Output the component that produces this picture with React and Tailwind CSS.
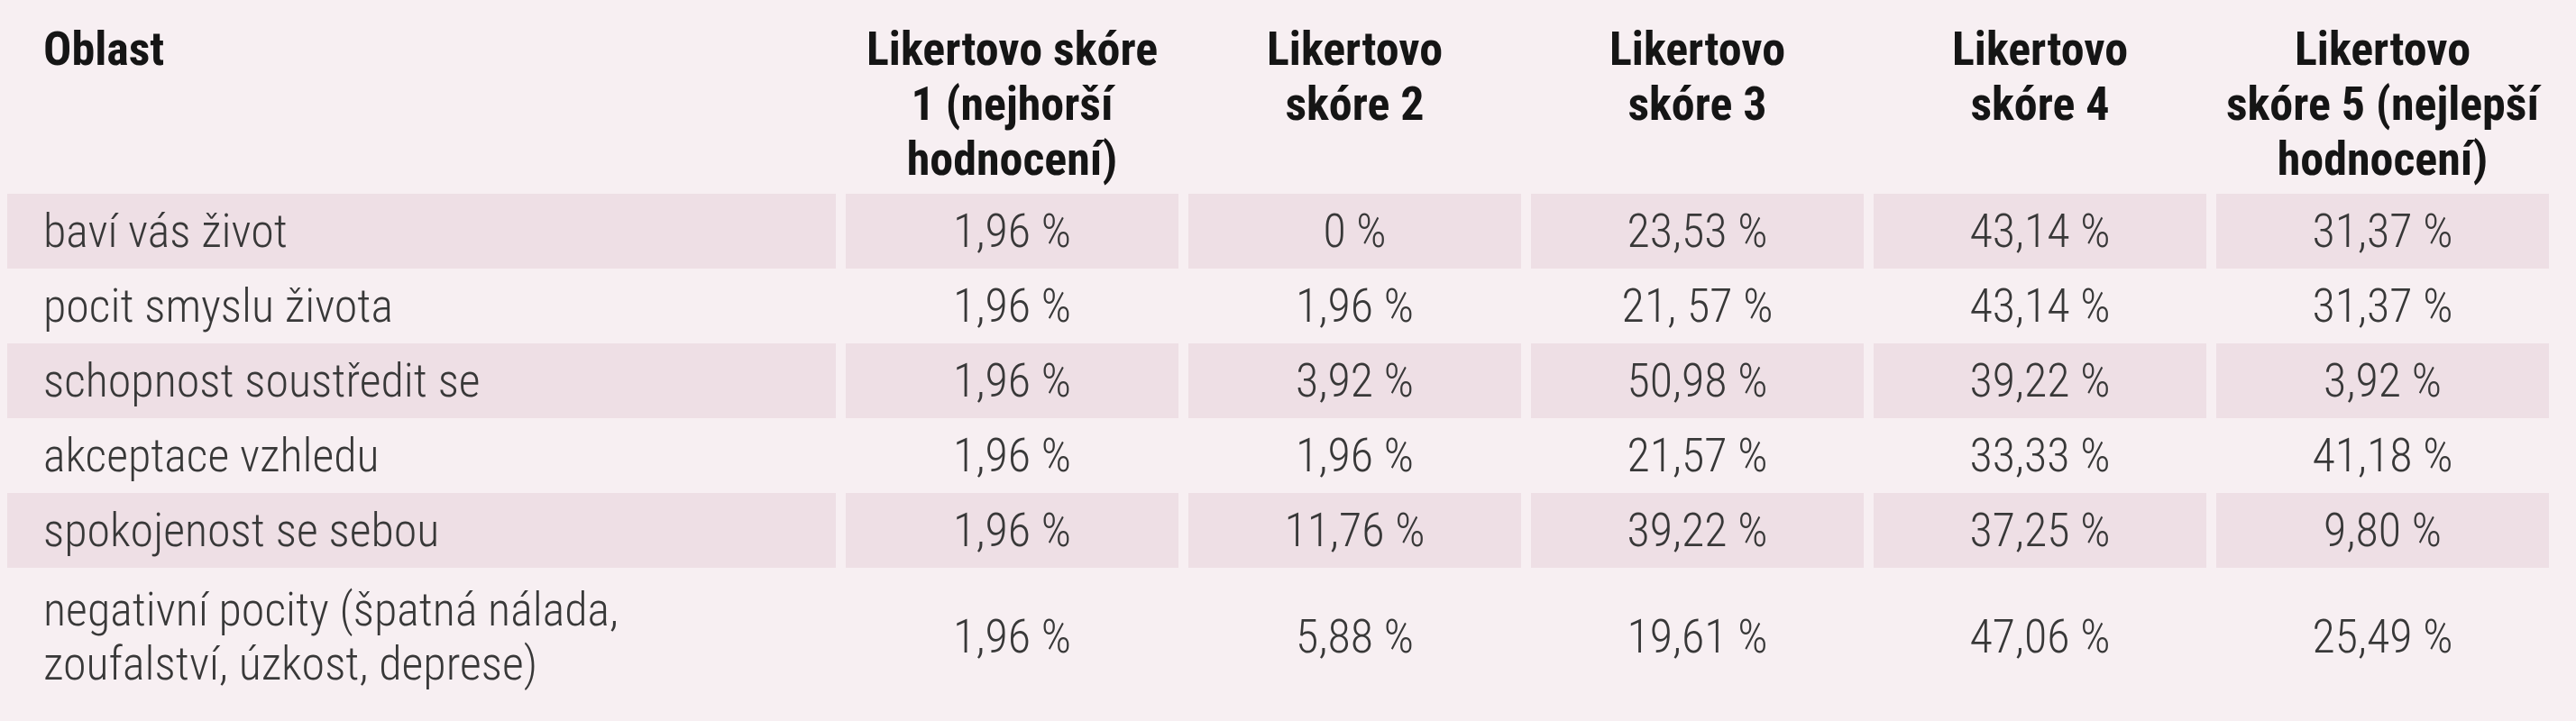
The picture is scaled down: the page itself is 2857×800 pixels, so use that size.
import React from "react";

const rows = [
  { label: "baví vás život", vals: ["1,96 %", "0 %", "23,53 %", "43,14 %", "31,37 %"], shaded: true },
  { label: "pocit smyslu života", vals: ["1,96 %", "1,96 %", "21, 57 %", "43,14 %", "31,37 %"], shaded: false },
  { label: "schopnost soustředit se", vals: ["1,96 %", "3,92 %", "50,98 %", "39,22 %", "3,92 %"], shaded: true },
  { label: "akceptace vzhledu", vals: ["1,96 %", "1,96 %", "21,57 %", "33,33 %", "41,18 %"], shaded: false },
  { label: "spokojenost se sebou", vals: ["1,96 %", "11,76 %", "39,22 %", "37,25 %", "9,80 %"], shaded: true },
];

const lastRow = {
  label: ["negativní pocity (špatná nálada,", "zoufalství, úzkost, deprese)"],
  vals: ["1,96 %", "5,88 %", "19,61 %", "47,06 %", "25,49 %"],
};

const headers = [
  ["Likertovo skóre", "1 (nejhorší", "hodnocení)"],
  ["Likertovo", "skóre 2"],
  ["Likertovo", "skóre 3"],
  ["Likertovo", "skóre 4"],
  ["Likertovo", "skóre 5 (nejlepší", "hodnocení)"],
];

export default function App() {
  return (
    <div className="min-h-[800px] w-[2857px] bg-[#f7eff2] pl-[8px] font-['Roboto_Condensed','Roboto',sans-serif] text-[52px]">
      <div className="grid w-[2820px] grid-cols-[919px_repeat(5,369px)] gap-x-[11px]">
        {/* Header */}
        <div className="h-[215px] pl-[40px] pt-[24px] font-bold leading-[61px] text-[#151515]">Oblast</div>
        {headers.map((h, i) => (
          <div key={i} className="h-[215px] pt-[24px] text-center font-bold leading-[61px] text-[#151515]">
            {h.map((line, j) => (
              <div key={j}>{line}</div>
            ))}
          </div>
        ))}

        {/* Body rows */}
        {rows.map((r) => (
          <React.Fragment key={r.label}>
            <div
              className={`flex h-[83px] items-center pl-[40px] font-light leading-[60px] text-[#383838] ${
                r.shaded ? "bg-[#eedfe5]" : ""
              }`}
            >
              {r.label}
            </div>
            {r.vals.map((v, i) => (
              <div
                key={i}
                className={`flex h-[83px] items-center justify-center font-light leading-[60px] text-[#383838] ${
                  r.shaded ? "bg-[#eedfe5]" : ""
                }`}
              >
                {v}
              </div>
            ))}
          </React.Fragment>
        ))}

        {/* Last row */}
        <div className="flex h-[154px] flex-col justify-center pl-[40px] font-light leading-[60px] text-[#383838]">
          {lastRow.label.map((l) => (
            <div key={l}>{l}</div>
          ))}
        </div>
        {lastRow.vals.map((v, i) => (
          <div key={i} className="flex h-[154px] items-center justify-center font-light leading-[60px] text-[#383838]">
            {v}
          </div>
        ))}
      </div>
    </div>
  );
}
